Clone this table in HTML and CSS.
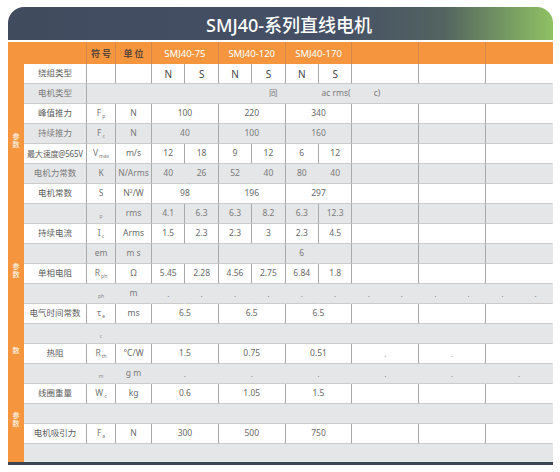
FILE: index.html
```html
<!DOCTYPE html>
<html lang="zh">
<head>
<meta charset="utf-8">
<title>SMJ40-系列直线电机</title>
<link rel="stylesheet" href="styles.css">
</head>
<body>
<div class="sheet">
  <div class="banner">SMJ40-系列直线电机</div>
  <table class="spec">
    <colgroup>
      <col class="c-side"><col class="c-label"><col class="c-sym"><col class="c-unit">
      <col class="c-half"><col class="c-half"><col class="c-half"><col class="c-half"><col class="c-half"><col class="c-half">
      <col class="c-full"><col class="c-full"><col class="c-full">
    </colgroup>
    <thead>
      <tr class="head">
        <th colspan="2"></th>
        <th class="dk">符号</th>
        <th class="dk">单位</th>
        <th colspan="2">SMJ40-75</th>
        <th colspan="2">SMJ40-120</th>
        <th colspan="2">SMJ40-170</th>
        <th></th><th></th><th class="end"></th>
      </tr>
    </thead>
    <tbody>
      <tr>
        <td class="side" rowspan="7"><span class="vt">参</span><span class="vt">数</span></td>
        <td class="lbl">绕组类型</td><td></td><td></td>
        <td class="ns">N</td><td class="ns">S</td><td class="ns">N</td><td class="ns">S</td><td class="ns">N</td><td class="ns">S</td>
        <td></td><td></td><td class="end"></td>
      </tr>
      <tr class="g">
        <td class="lbl">电机类型</td>
        <td colspan="11" class="end left"><span class="t1">同</span><span class="t2">ac rms(</span><span class="t3">c)</span></td>
      </tr>
      <tr>
        <td class="lbl">峰值推力</td><td class="sym">F<sub>p</sub></td><td>N</td>
        <td colspan="2">100</td><td colspan="2">220</td><td colspan="2">340</td>
        <td></td><td></td><td class="end"></td>
      </tr>
      <tr class="g">
        <td class="lbl">持续推力</td><td class="sym">F<sub>c</sub></td><td>N</td>
        <td colspan="2">40</td><td colspan="2">100</td><td colspan="2">160</td>
        <td></td><td></td><td class="end"></td>
      </tr>
      <tr>
        <td class="lbl tight">最大速度@565V</td><td class="sym">V<sub>max</sub></td><td>m/s</td>
        <td>12</td><td>18</td><td>9</td><td>12</td><td>6</td><td>12</td>
        <td></td><td></td><td class="end"></td>
      </tr>
      <tr class="g">
        <td class="lbl">电机力常数</td><td class="sym">K</td><td>N/Arms</td>
        <td class="nb">40</td><td>26</td><td class="nb">52</td><td>40</td><td class="nb">80</td><td>40</td>
        <td></td><td></td><td class="end"></td>
      </tr>
      <tr>
        <td class="lbl">电机常数</td><td class="sym">S</td><td>N<sup>2</sup>/W</td>
        <td colspan="2">98</td><td colspan="2">196</td><td colspan="2">297</td>
        <td></td><td></td><td class="end"></td>
      </tr>

      <tr class="g">
        <td class="side brk" rowspan="6"><span class="vt">参</span><span class="vt">数</span></td>
        <td class="lbl"></td><td class="sym"><span class="tiny">p</span></td><td>rms</td>
        <td>4.1</td><td>6.3</td><td>6.3</td><td>8.2</td><td>6.3</td><td>12.3</td>
        <td></td><td></td><td class="end"></td>
      </tr>
      <tr>
        <td class="lbl">持续电流</td><td class="sym">I<sub>c</sub></td><td>Arms</td>
        <td>1.5</td><td>2.3</td><td>2.3</td><td>3</td><td>2.3</td><td>4.5</td>
        <td></td><td></td><td class="end"></td>
      </tr>
      <tr class="g">
        <td class="lbl"></td><td class="sym">em</td><td>m s</td>
        <td colspan="2"></td><td colspan="2"></td><td class="nb">6</td><td></td>
        <td></td><td></td><td class="end"></td>
      </tr>
      <tr>
        <td class="lbl">单相电阻</td><td class="sym">R<sub>ph</sub></td><td>Ω</td>
        <td>5.45</td><td>2.28</td><td>4.56</td><td>2.75</td><td>6.84</td><td>1.8</td>
        <td></td><td></td><td class="end"></td>
      </tr>
      <tr class="g open">
        <td class="lbl"></td><td class="sym"><span class="tiny">ph</span></td><td>m</td>
        <td class="dot">.</td><td class="dot">.</td><td class="dot">.</td><td class="dot">.</td><td class="dot">.</td><td class="dot">.</td>
        <td class="dot"><span class="pair"><i>.</i><i>.</i></span></td>
        <td class="dot"><span class="pair"><i>.</i><i>.</i></span></td>
        <td class="dot end"><span class="pair"><i>.</i><i>.</i></span></td>
      </tr>
      <tr>
        <td class="lbl">电气时间常数</td><td class="sym">τ<sub>e</sub></td><td>ms</td>
        <td colspan="2">6.5</td><td colspan="2">6.5</td><td colspan="2">6.5</td>
        <td></td><td></td><td class="end"></td>
      </tr>

      <tr class="g open">
        <td class="side brk solo" rowspan="2"><span class="vt">数</span></td>
        <td class="lbl"></td><td class="sym"><span class="tiny">c</span></td>
        <td colspan="10" class="end"></td>
      </tr>
      <tr>
        <td class="lbl">热阻</td><td class="sym">R<sub>th</sub></td><td>°C/W</td>
        <td colspan="2">1.5</td><td colspan="2">0.75</td><td colspan="2">0.51</td>
        <td class="dot">.</td><td class="dot">.</td><td class="end"></td>
      </tr>

      <tr class="g open">
        <td class="side brk" rowspan="5"><span class="vt">参</span><span class="vt">数</span></td>
        <td class="lbl"></td><td class="sym"><span class="tiny">m</span></td><td>g m</td>
        <td colspan="2" class="dot">.</td><td colspan="2" class="dot">.</td><td colspan="2" class="dot">.</td>
        <td class="dot">.</td><td class="dot">.</td><td class="dot end">.</td>
      </tr>
      <tr>
        <td class="lbl">线圈重量</td><td class="sym">W<sub>c</sub></td><td>kg</td>
        <td colspan="2">0.6</td><td colspan="2">1.05</td><td colspan="2">1.5</td>
        <td></td><td></td><td class="end"></td>
      </tr>
      <tr class="g open">
        <td colspan="12" class="end"></td>
      </tr>
      <tr>
        <td class="lbl">电机吸引力</td><td class="sym">F<sub>a</sub></td><td>N</td>
        <td colspan="2">300</td><td colspan="2">500</td><td colspan="2">750</td>
        <td></td><td></td><td class="end"></td>
      </tr>
      <tr class="g open last">
        <td colspan="12" class="end"></td>
      </tr>
    </tbody>
  </table>
</div>
</body>
</html>
```

FILE: styles.css
```css
html, body {
  margin: 0;
  background: #ffffff;
}

body {
  padding: 7px 0 0 8px;
  font-family: "Noto Sans", "Noto Sans CJK SC", sans-serif;
}

.sheet {
  width: 545px;
}

.banner {
  height: 33px;
  margin-bottom: 2px;
  padding-left: 17px;
  box-sizing: border-box;
  border-radius: 16px 16px 0 0;
  background: linear-gradient(90deg, #414b5e 0%, #455066 60%, #536460 80%, #8fc164 100%);
  color: #ffffff;
  font-size: 18px;
  font-weight: 500;
  display: flex;
  align-items: center;
  justify-content: center;
}

.spec {
  width: 545px;
  table-layout: fixed;
  border-collapse: separate;
  border-spacing: 0;
  border-bottom: 3px solid #3b4453;
}

.c-side { width: 16px; }
.c-label { width: 63px; }
.c-sym { width: 29px; }
.c-unit { width: 36px; }
.c-half { width: 33.4px; }
.c-full { width: 66.8px; }

.head th {
  height: 22px;
  padding: 0;
  background: #f5963f;
  color: #ffffff;
  font-size: 9.5px;
  font-weight: 400;
  border-right: 1px solid #d58849;
  white-space: nowrap;
}

.head th.dk {
  color: #5d4535;
  font-weight: 700;
  font-size: 9px;
  letter-spacing: 2px;
  text-indent: 2px;
}

.head th.end {
  border-right-color: transparent;
}

tbody tr {
  height: 20px;
}

td {
  padding: 0;
  text-align: center;
  vertical-align: middle;
  font-size: 8.5px;
  color: #6a6a6a;
  line-height: 1;
  white-space: nowrap;
  overflow: hidden;
  background: #ffffff;
  border-right: 1px solid #a9a9a9;
  border-bottom: 1px solid #cbcbcb;
}

tr.g td {
  background: #e5e6e8;
  color: #7a7a7a;
}

td.end {
  border-right-color: transparent;
}

td.nb,
tr.open td {
  border-right-color: transparent;
}

tr.last td {
  border-bottom: none;
}

tr.last {
  height: 18px;
}

td.side,
tr.g td.side {
  background: #f5963f;
  border: none;
  color: #fde6d0;
  font-size: 7px;
  font-weight: 700;
  padding-top: 14px;
  box-sizing: border-box;
}

.vt {
  display: block;
  height: 8px;
  line-height: 8px;
}

td.side.brk {
  border-top: 2px solid #ffffff;
}

td.side.solo {
  padding-top: 18px;
}

td.lbl {
  color: #5c5c5c;
}

td.tight {
  font-size: 8px;
  letter-spacing: -0.2px;
}

td.ns {
  font-size: 10px;
  color: #454545;
}

td.sym {
  color: #777777;
}

sub {
  font-size: 5px;
  vertical-align: -2px;
  margin-left: 1px;
}

sup {
  font-size: 5px;
  vertical-align: 3px;
}

.tiny {
  display: inline-block;
  font-size: 5px;
  padding-top: 6px;
  color: #8a8a8a;
}

td.left {
  text-align: left;
}

.t1 { margin-left: 182px; }
.t2 { margin-left: 44px; }
.t3 { margin-left: 23px; }

td.dot {
  color: #a0a0a0;
  font-size: 8px;
}

.pair {
  display: flex;
  justify-content: space-around;
}

.pair i {
  font-style: normal;
}
```
